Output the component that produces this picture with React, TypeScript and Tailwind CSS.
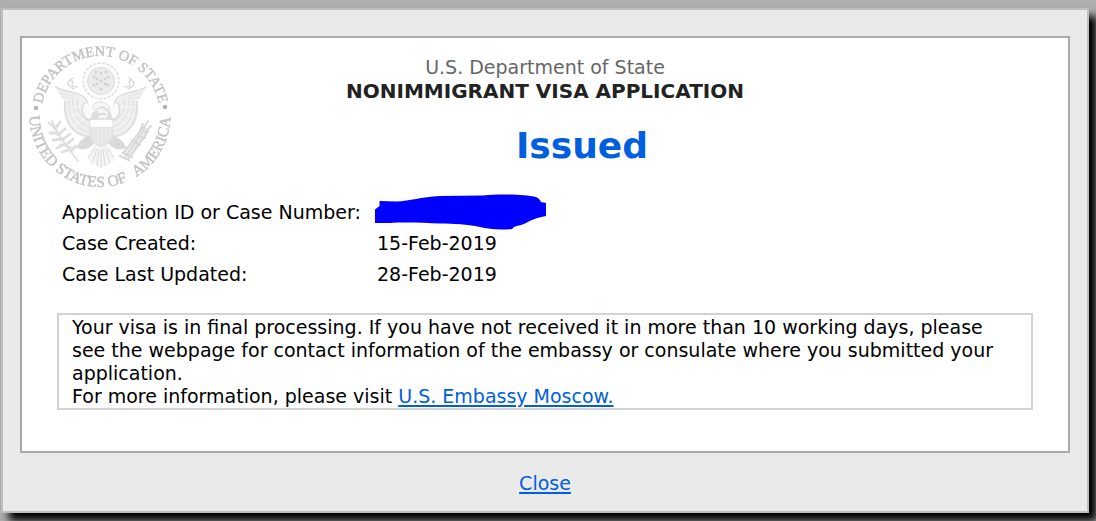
import React from "react";

const STARS = [
  [101, 73], [101, 81], [101, 89], [94, 77], [108, 77], [94, 85], [108, 85],
  [97, 79], [105, 79], [97, 84], [105, 84], [96, 72], [106, 72],
];

function Wing() {
  return (
    <g fill="none" strokeLinecap="round">
      <path
        d="M56 87 C62 91 70 91 78 94 C86 98 90 104 90 112 L90 137 C78 136 67 127 65 115 C64 109 65 104 65 101 C61 98 58 93 56 87Z"
        fill="#f0f0f0"
      />
      <path d="M56 87 C62 91 70 91 78 94 C84 96 88 100 88 105" stroke="#dfdfdf" strokeWidth="1.6" />
      <path d="M60 93 L73 96 M62 98 L74 98" stroke="#e3e3e3" />
      <path d="M65 102 C64 119 70 134 89 137" stroke="#e0e0e0" strokeWidth="2.2" />
      <path d="M69 101 C68 116 74 128 89 132" stroke="#e6e6e6" strokeWidth="2" />
      <path d="M73 100 C72 112 78 123 89 127" stroke="#e6e6e6" strokeWidth="1.8" />
      <path d="M78 99 C75 108 80 117 89 121" stroke="#e2e2e2" strokeWidth="1.6" />
      <path d="M67 107 L80 107 M69 116 L81 113 M74 126 L84 119" stroke="#fafafa" strokeWidth="0.7" />
      <path d="M86 102 C81 105 81 114 87 119 C91 120 94 117 95 113" stroke="#d9d9d9" strokeWidth="1.3" fill="#fafafa" />
      <path d="M74 89 C70 87 66 84 69 81 C72 79 74 82 72 84 M70 80 L73 78 M72 86 L77 87" stroke="#dadada" strokeWidth="1.5" />
    </g>
  );
}

function Seal() {
  return (
    <svg viewBox="26 40 150 152" className="block h-[152px] w-[150px]" role="img" aria-label="Department of State seal">
      <defs>
        <path id="seal-top" d="M41 115.500 A59.500 59.500 0 0 1 160 115.500" />
        <path id="seal-bottom" d="M29.500 115 A70.500 72 0 0 0 170.500 115" />
        <filter id="seal-soft" x="0" y="0" width="1" height="1">
          <feGaussianBlur stdDeviation="0.5" />
        </filter>
      </defs>
      <g filter="url(#seal-soft)">
        <g fill="#c2c2c2" stroke="#c2c2c2" strokeWidth="0.4" fontFamily="'Liberation Serif', serif">
          <text fontSize="14.5" textAnchor="middle">
            <textPath href="#seal-top" startOffset="50%">DEPARTMENT OF STATE</textPath>
          </text>
          <text fontSize="15.5">
            <textPath href="#seal-bottom" startOffset="1">UNITED STATES OF</textPath>
          </text>
          <text fontSize="15.5" textAnchor="end">
            <textPath href="#seal-bottom" startOffset="99%">AMERICA</textPath>
          </text>
        </g>
        <circle cx="36" cy="108" r="2.300" fill="#b5b5b5" />
        <circle cx="165" cy="107" r="2.300" fill="#b5b5b5" />

        <circle cx="101" cy="81" r="18" fill="#fbfbfb" stroke="#dedede" strokeWidth="1.5" strokeDasharray="3 1.500" />
        <circle cx="101" cy="81" r="13.5" fill="#ececec" stroke="#dcdcdc" />
        {STARS.map(([x, y]) => (
          <circle key={`${x}-${y}`} cx={x} cy={y} r="1.5" fill="#d3d3d3" />
        ))}

        <Wing />
        <g transform="translate(202 0) scale(-1 1)">
          <Wing />
        </g>

        <path d="M93 105 C96 101 103 101 107 104 C111 107 109 112 107 119 L95 119 C97 114 97 110 93 108Z" fill="#f6f6f6" stroke="#dddddd" />
        <path d="M97 109 L103 107 L108 111 M98 114 L106 114" fill="none" stroke="#d4d4d4" strokeWidth="1.3" />
        <path d="M92 113 L97 109 L99 119 L91 119Z M109 109 L113 119 L106 119Z" fill="#dedede" />

        <path d="M90 136 C82 137 78 143 77 148 C83 151 90 149 94 143Z M112 136 C120 137 125 143 126 148 C119 151 113 149 108 143Z" fill="#dadada" />
        <path d="M93 144 L109 144 L115 160 L110 164 L105 166 L101 168 L97 166 L92 164 L87 159Z" fill="#f6f6f6" />
        <path d="M95 148 L88 158 M97 149 L92 163 M99 149 L97 166 M101 149 L101 168 M103 149 L105 166 M105 149 L110 163 M107 148 L114 158" stroke="#dadada" strokeWidth="1" />
        <path d="M90 119 H113 V136 C113 142 106 144 101 147 C96 144 90 142 90 136Z" fill="#e6e6e6" stroke="#dddddd" />
        <path d="M90.500 120 H112.500 V127 H90.500Z" fill="#ffffff" />
        <path d="M94 128 V141 M98 128 V144 M102 128 V145 M106 128 V143 M110 128 V140" stroke="#ebebeb" />

        <g fill="none" stroke="#dedede" strokeWidth="1.800" strokeLinecap="round">
          <path d="M52 121 C57 134 66 145 78 161 M60 144 L73 148 L84 143" />
          <path d="M54 127 L49 123 M55 129 L60 122 M57 133 L50 133 M58 135 L65 129 M61 139 L53 140 M62 140 L70 134 M65 144 L57 148 M66 145 L73 139 M69 150 L62 152 M71 151 L76 146" strokeWidth="2.800" />
        </g>
        <path d="M122 154 L141 130 L149 131 L143 141 L130 159Z" fill="#ebebeb" />
        <g fill="none" stroke="#d8d8d8" strokeLinecap="round">
          <path d="M126 156 L145 128 M129 158 L148 131 M123 153 L141 130" strokeWidth="1.800" />
          <path d="M143 129 L148 121 M145 132 L151 126 M140 131 L143 124 M136 136 L145 138 M132 140 L140 145" strokeWidth="2" />
          <path d="M120 156 L129 160 M123 153 L132 157 M116 144 L126 148" strokeWidth="2.400" />
        </g>
      </g>
    </svg>
  );
}

function RedactedNumber() {
  return (
    <svg viewBox="374 193 173 37" className="-ml-[3px] -my-2 block h-[37px] w-[173px]" role="img" aria-label="Hidden case number">
      <path
        d="M375 209.500 L379.500 206 V201 L396 201.500 C411 201 420 197 440 196 L483 195.500 C498 194 525 194 536 197 C540 199 540.500 201 541 202 L546 203 V216 C536 218 531 220 526 223 C520 226 515 225 512 229 C499 230 488 229 480 227 C466 224 455 224 440 223.500 C425 223 406 222 390 223 H375Z"
        fill="#0000ff"
      />
    </svg>
  );
}

export default function App() {
  return (
    <div className="min-h-screen overflow-hidden bg-[#aeaeae] pt-2 pr-[7px] pb-2 pl-px font-['DejaVu_Sans',Verdana,sans-serif] text-[19px] leading-[23px] text-black">
      <main className="border-2 border-[#bfbfbf] bg-[#eaeaea] px-[17px] pt-[26px] pb-4 shadow-[8px_8px_8px_#000]">
        <section className="relative border-2 border-[#a9a9a9] bg-white px-[35px] pt-[17px] pb-[41px]">
          <div className="absolute top-[2px] left-1">
            <Seal />
          </div>
          <header className="text-center">
            <p className="leading-6 text-[#666]">U.S. Department of State</p>
            <h1 className="text-[20px] leading-6 font-bold text-[#222]">NONIMMIGRANT VISA APPLICATION</h1>
            <h2 className="mt-[23px] pl-[74px] text-[36px] leading-10 font-bold text-[#005edf]">Issued</h2>
          </header>
          <dl className="mt-[35px] grid grid-cols-[315px_1fr] gap-y-2 pl-[5px]">
            <dt className="whitespace-nowrap">Application ID or Case Number:</dt>
            <dd><RedactedNumber /></dd>
            <dt>Case Created:</dt>
            <dd>15-Feb-2019</dd>
            <dt>Case Last Updated:</dt>
            <dd>28-Feb-2019</dd>
          </dl>
          <div className="mt-[27px] border-2 border-[#d3d3d3] pt-px pr-3 pl-[13px]">
            <p>
              Your visa is in final processing. If you have not received it in more than 10 working days, please see the
              webpage for contact information of the embassy or consulate where you submitted your application.
            </p>
            <p>
              For more information, please visit{" "}
              <a href="#embassy" className="text-[#005edf] underline decoration-2 underline-offset-2">U.S. Embassy Moscow.</a>
            </p>
          </div>
        </section>
        <div className="mt-[19px] text-center">
          <a href="#close" className="text-[#005edf] underline decoration-2 underline-offset-2">Close</a>
        </div>
      </main>
    </div>
  );
}
